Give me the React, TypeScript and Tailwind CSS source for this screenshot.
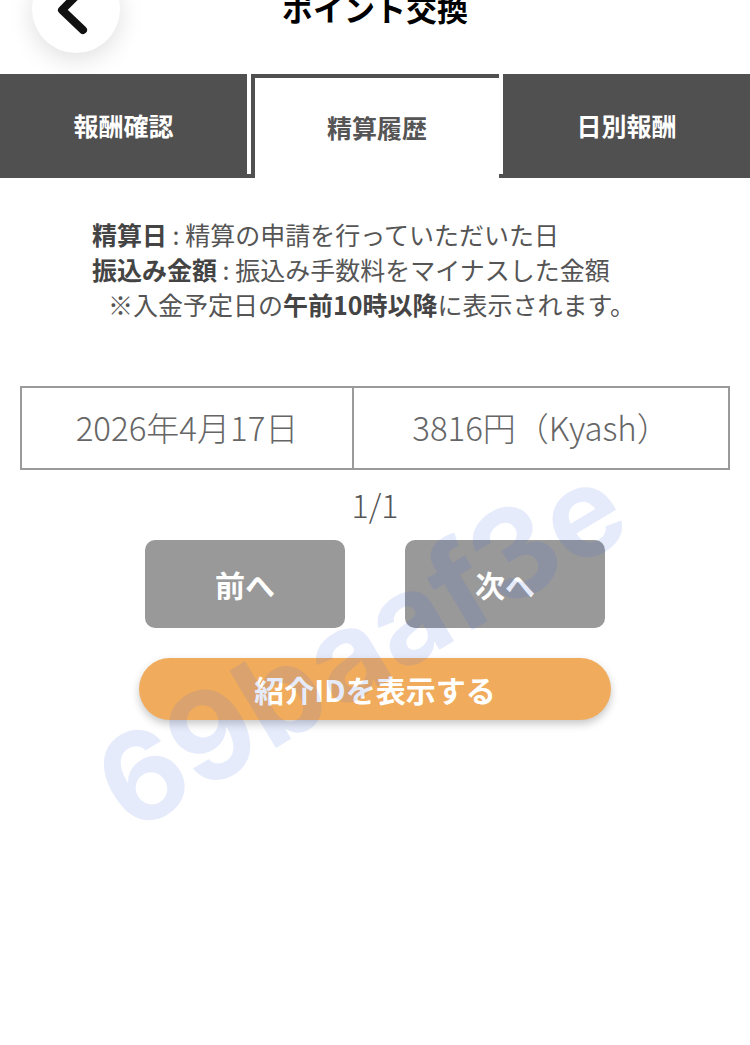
export default function App() {
  return (
    <div className="relative min-h-[1045px] overflow-hidden bg-white font-['Noto_Sans_CJK_JP','Noto_Sans',sans-serif]">
      {/* header, scrolled so its top is cut off */}
      <header className="h-[74px] overflow-hidden">
        <div className="-mt-[35px] grid h-[88px] grid-cols-[1fr_auto_1fr] items-center">
          <div className="pl-8">
            <button className="flex h-[88px] w-[88px] items-center justify-center rounded-full bg-white shadow-[0_6px_24px_rgba(0,0,0,0.13)]">
              <svg width="88" height="88" viewBox="0 0 88 88" fill="none">
                <path d="M51 24 L30 45 L51 65" stroke="#111" strokeWidth="8" strokeLinecap="round" strokeLinejoin="round" />
              </svg>
            </button>
          </div>
          <h1 className="-mt-[4px] text-[31px] font-bold leading-none text-black">ポイント交換</h1>
          <div />
        </div>
      </header>

      {/* tabs */}
      <nav className="flex h-[104px] bg-[#505050]">
        <div className="flex w-[247px] items-center justify-center text-[25px] font-bold text-white">報酬確認</div>
        <div className="mb-1 w-1 bg-white" />
        <div className="flex w-[248px] items-center justify-center border-l-4 border-t-4 border-[#505050] bg-white text-[25px] font-bold text-[#555]">
          精算履歴
        </div>
        <div className="mb-1 w-1 bg-white" />
        <div className="flex flex-1 items-center justify-center text-[25px] font-bold text-white">日別報酬</div>
      </nav>

      <main>
        <div className="pl-[92px] pt-[39px] text-[25px] leading-[35px] text-[#555]">
          <p>
            <span className="font-bold text-[#444]">精算日</span> : 精算の申請を行っていただいた日
          </p>
          <p>
            <span className="font-bold text-[#444]">振込み金額</span> : 振込み手数料をマイナスした金額
          </p>
          <p className="pl-4">
            ※入金予定日の<span className="font-bold text-[#444]">午前10時以降</span>に表示されます。
          </p>
        </div>

        <div className="mx-5 mt-[64px] flex h-[84px] border-2 border-[#9a9a9a] text-[33px] font-light text-[#666]">
          <div className="flex w-[332px] items-center justify-center border-r-2 border-[#9a9a9a]">2026年4月17日</div>
          <div className="flex flex-1 items-center justify-center">3816円（Kyash）</div>
        </div>

        <p className="mt-[14px] text-center text-[32px] font-light leading-[40px] text-[#555]">1/1</p>

        <div className="mt-[16px] flex justify-center gap-[60px]">
          <button className="flex h-[88px] w-[200px] items-center justify-center rounded-[10px] bg-[#999] text-[30px] font-bold text-white">
            前へ
          </button>
          <button className="flex h-[88px] w-[200px] items-center justify-center rounded-[10px] bg-[#999] text-[30px] font-bold text-white">
            次へ
          </button>
        </div>

        <div className="mt-[30px] flex justify-center">
          <button className="flex h-[62px] w-[472px] items-center justify-center rounded-full bg-[#f0ac5c] text-[30px] font-bold text-white shadow-[0_4px_8px_rgba(0,0,0,0.22)]">
            紹介IDを表示する
          </button>
        </div>
      </main>

      {/* watermark */}
      <div className="pointer-events-none absolute left-[360px] top-[645px] -translate-x-1/2 -translate-y-1/2 -rotate-[31deg] whitespace-nowrap font-['Inter',sans-serif] text-[124px] font-bold leading-none text-[rgba(60,100,230,0.13)]">
        69baaf3e
      </div>
    </div>
  );
}
